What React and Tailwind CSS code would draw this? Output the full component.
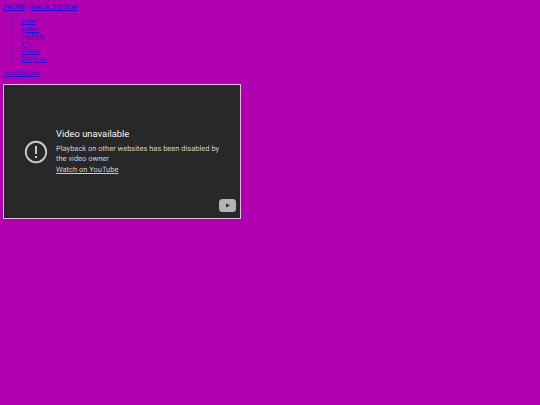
import React from 'react';

const links = ['home', 'games', 'marbMe', 'gifs', 'Videos', 'fluffylots'];

export default function App() {
  return (
    <div className="min-h-[405px] w-full bg-[#b000b0] pt-[4px] pl-[3.5px] font-['Liberation_Serif',serif] text-[7px] leading-[7.6px] text-[#1c10dc] [text-rendering:geometricPrecision]">
      <p className="text-[6.9px] font-bold leading-[8px]">
        <a href="#home" className="underline">HOME</a>
        <span className="text-[#400060]"> | </span>
        <a href="#top" className="underline">BACK TO TOP</a>
      </p>

      <ul className="mt-[6px] list-disc pl-[17px] marker:text-[#400060]">
        {links.map((l) => (
          <li key={l}>
            <a href="#" className="underline">{l}</a>
          </li>
        ))}
      </ul>

      <p className="mt-[6px]">
        <a href="#" className="underline">youtube.com</a>
      </p>

      {/* embedded player */}
      <div className="mt-[7px] -ml-[0.5px] flex h-[135px] w-[238px] flex-col border border-[#e2b8e2] bg-[#282828] font-['Roboto',sans-serif] text-white">
        <div className="flex flex-1 items-center pt-[20px] pl-[20px]">
          <svg width="24" height="24" viewBox="0 0 24 24" fill="none" className="shrink-0 text-[#c8c8c8]">
            <circle cx="12" cy="12" r="10.2" stroke="currentColor" strokeWidth="1.9" />
            <rect x="11" y="6" width="2" height="8" fill="currentColor" />
            <rect x="11" y="16" width="2" height="2" fill="currentColor" />
          </svg>
          <div className="ml-[8px]">
            <div className="text-[9.4px] leading-[12px] font-normal text-[#f1f1f1]">Video unavailable</div>
            <div className="mt-[3px] w-[170px] text-[7.5px] leading-[10.5px] text-[#cccccc]">
              Playback on other websites has been disabled by the video owner
            </div>
            <a href="#" className="block text-[7.5px] leading-[10.5px] text-[#cccccc] underline">Watch on YouTube</a>
          </div>
        </div>
        <div className="flex justify-end pr-[4px] pb-[6px]">
          <svg width="17" height="13" viewBox="0 0 17 13">
            <rect width="17" height="13" rx="3.5" fill="#b4b4b4" />
            <path d="M7 4.5 L11 6.5 L7 8.5 Z" fill="#282828" />
          </svg>
        </div>
      </div>
    </div>
  );
}
